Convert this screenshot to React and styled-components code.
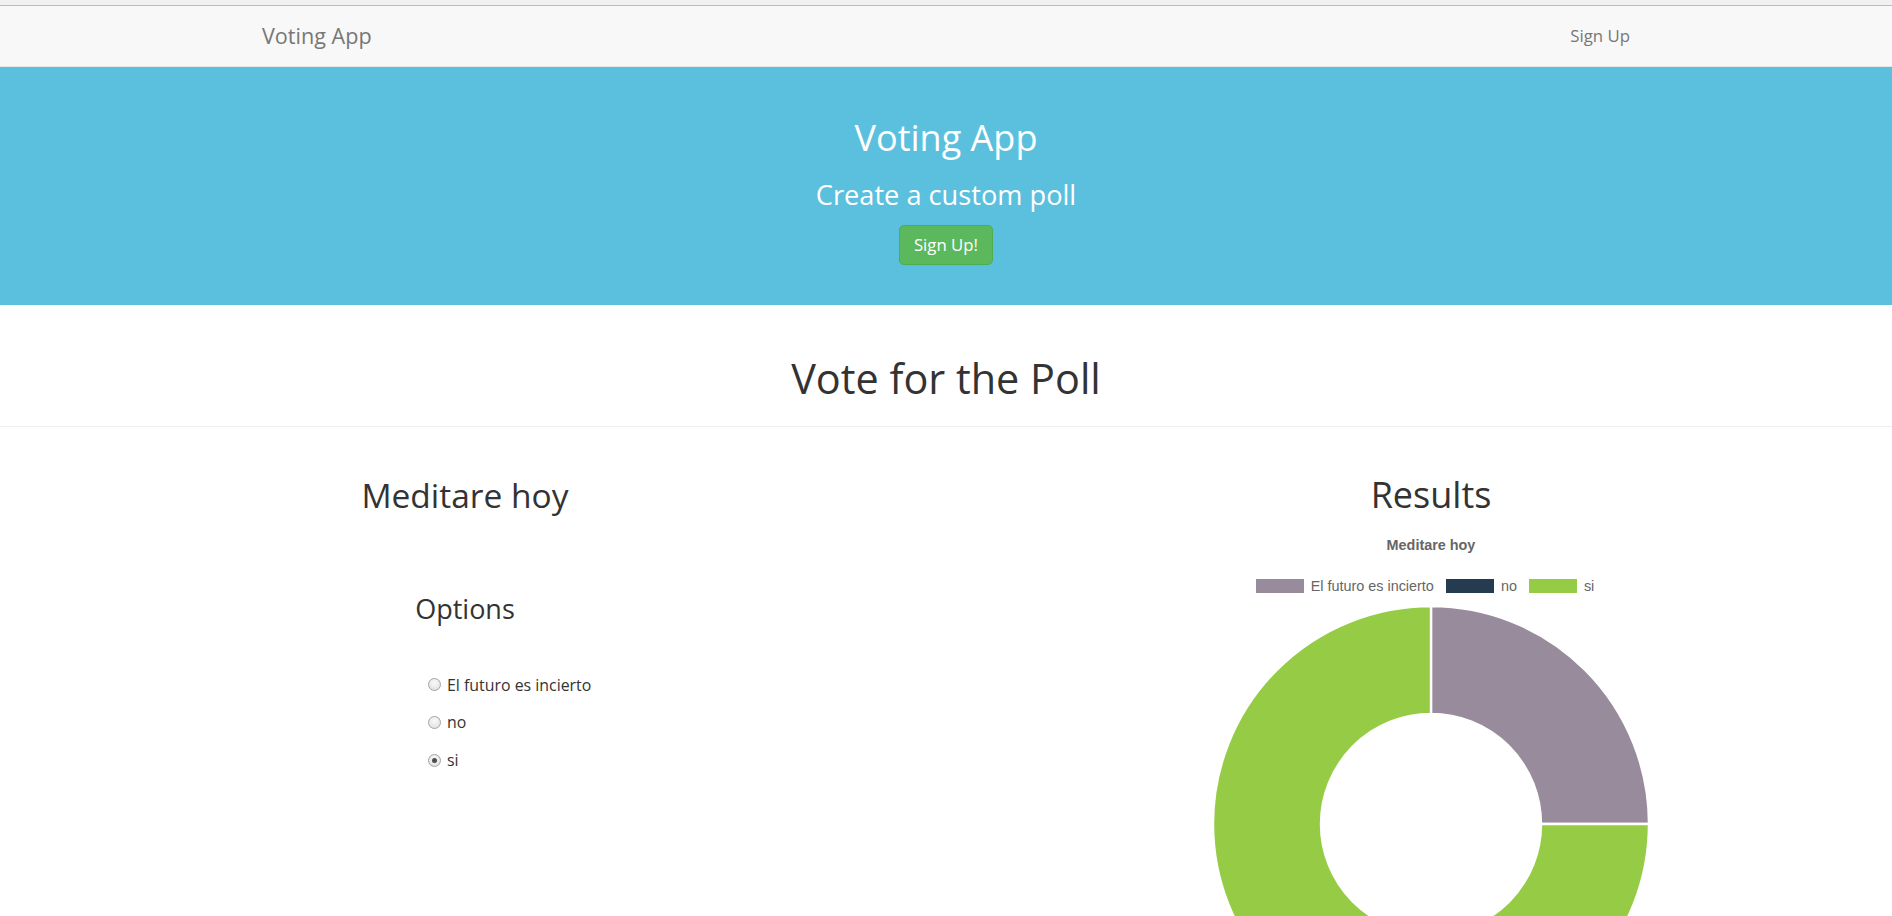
import React from "react";
import styled, { createGlobalStyle } from "styled-components";

const poll = {
  question: "Meditare hoy",
  options: [
    { label: "El futuro es incierto", votes: 1, color: "#978b9c" },
    { label: "no", votes: 0, color: "#243b50" },
    { label: "si", votes: 3, color: "#96cc45" }
  ],
  selected: "si"
};

const GlobalStyle = createGlobalStyle`
  html, body {
    margin: 0;
    padding: 0;
  }
  body {
    overflow: hidden;
    background: #fff;
    color: #333;
    font-family: "Open Sans", "Lato", sans-serif;
  }
  * {
    box-sizing: border-box;
  }
`;

const TopStrip = styled.div`
  height: 6px;
  background: #f1f1f1;
  border-bottom: 1px solid #bcbcbc;
`;

const Navbar = styled.nav`
  height: 61px;
  background: #f8f8f8;
  border-bottom: 1px solid #e7e7e7;
`;

const NavInner = styled.div`
  width: 1404px;
  height: 100%;
  margin: 0 auto;
  padding: 0 18px 2px;
  display: flex;
  align-items: center;
  justify-content: space-between;
`;

const Brand = styled.a`
  font-size: 21.6px;
  color: #777;
  text-decoration: none;
`;

const NavLink = styled.a`
  font-size: 16.8px;
  color: #777;
  text-decoration: none;
`;

const Jumbotron = styled.header`
  background: #5bc0de;
  color: #fff;
  text-align: center;
  padding: 47px 0 40px;
  display: flex;
  flex-direction: column;
  align-items: center;
`;

const HeroTitle = styled.h1`
  margin: 0;
  font-size: 36px;
  line-height: 48px;
  font-weight: 400;
`;

const HeroSub = styled.h3`
  margin: 17.4px 0 0;
  font-size: 27.2px;
  line-height: 32px;
  font-weight: 400;
`;

const SuccessButton = styled.button`
  margin-top: 13.6px;
  height: 40px;
  padding: 0 14px;
  border: 1px solid #4cae4c;
  border-radius: 5px;
  background: #5cb85c;
  color: #fff;
  font-family: inherit;
  font-size: 16.8px;
  cursor: pointer;
`;

const PageHeader = styled.div`
  padding-top: 49px;
  padding-bottom: 24px;
  border-bottom: 1px solid #eee;
  text-align: center;
`;

const PageTitle = styled.h1`
  margin: 0;
  font-size: 41.4px;
  line-height: 48px;
  font-weight: 400;
  color: #333;
`;

const Row = styled.div`
  display: grid;
  grid-template-columns: 1fr 1fr;
`;

const Column = styled.section`
  display: flex;
  flex-direction: column;
  align-items: center;
  padding-left: ${props => (props.right ? "24px" : "0")};
  padding-right: ${props => (props.right ? "0" : "16px")};
`;

const ColumnTitle = styled.h2`
  margin: 48px 0 0;
  font-size: ${props => (props.narrow ? "33.5px" : "36px")};
  line-height: 40px;
  font-weight: 400;
  color: #333;
`;

const OptionsForm = styled.form`
  margin-top: 78.4px;
  width: 200px;
  display: flex;
  flex-direction: column;
  align-items: center;
`;

const OptionsTitle = styled.h3`
  margin: 0;
  font-size: 27px;
  line-height: 32px;
  font-weight: 400;
`;

const RadioList = styled.div`
  margin-top: 47.4px;
  align-self: stretch;
  padding-left: 63px;
  display: flex;
  flex-direction: column;
  gap: 13.7px;
`;

const RadioLabel = styled.label`
  display: flex;
  align-items: center;
  height: 24px;
  gap: 6px;
  font-size: 15.9px;
  color: #333;
  white-space: nowrap;
`;

const Radio = styled.input`
  appearance: none;
  margin: 0;
  width: 13px;
  height: 13px;
  border-radius: 50%;
  border: 1px solid #a3a3a3;
  background: radial-gradient(circle at 50% 35%, #fafafa, #dcdcdc);
  position: relative;
  flex: none;
  &:checked::after {
    content: "";
    position: absolute;
    left: 3px;
    top: 3px;
    width: 5px;
    height: 5px;
    border-radius: 50%;
    background: #4d4d4d;
  }
`;

const ChartTitle = styled.div`
  margin-top: 22px;
  font-family: "Liberation Sans", Arial, sans-serif;
  font-size: 14.4px;
  line-height: 17px;
  font-weight: 700;
  color: #666;
`;

const Legend = styled.ul`
  margin: 25px 0 0;
  padding: 0;
  list-style: none;
  display: flex;
  align-items: center;
  height: 14px;
`;

const LegendItem = styled.li`
  display: flex;
  align-items: center;
  gap: 7px;
  margin-left: 12px;
  font-family: "Liberation Sans", Arial, sans-serif;
  font-size: 14.4px;
  color: #666;
  &:first-child {
    margin-left: 0;
  }
  &:last-child {
    margin-right: 12px;
  }
`;

const Swatch = styled.span`
  width: 48px;
  height: 14px;
  background: ${props => props.color};
`;

const Donut = styled.svg`
  margin-top: 11px;
  display: block;
  flex: none;
`;

const polar = (cx, cy, r, deg) => {
  const a = ((deg - 90) * Math.PI) / 180;
  return [cx + r * Math.cos(a), cy + r * Math.sin(a)];
};

const arcPath = (cx, cy, R, r, start, end) => {
  const large = end - start > 180 ? 1 : 0;
  const [x1, y1] = polar(cx, cy, R, start);
  const [x2, y2] = polar(cx, cy, R, end);
  const [x3, y3] = polar(cx, cy, r, end);
  const [x4, y4] = polar(cx, cy, r, start);
  return `M${x1} ${y1} A${R} ${R} 0 ${large} 1 ${x2} ${y2} L${x3} ${y3} A${r} ${r} 0 ${large} 0 ${x4} ${y4} Z`;
};

function DoughnutChart({ options }) {
  const total = options.reduce((s, o) => s + o.votes, 0);
  let angle = 0;
  const slices = options
    .filter(o => o.votes > 0)
    .map(o => {
      const start = angle;
      angle += (o.votes / total) * 360;
      return { ...o, start, end: angle };
    });
  return (
    <Donut width="440" height="440" viewBox="0 0 440 440">
      {slices.map(s => (
        <path
          key={s.label}
          d={arcPath(220, 220, 218, 110, s.start, s.end)}
          fill={s.color}
          stroke="#fff"
          strokeWidth="2.4"
        />
      ))}
    </Donut>
  );
}

export default function App() {
  return (
    <>
      <GlobalStyle />
      <TopStrip />
      <Navbar>
        <NavInner>
          <Brand href="#">Voting App</Brand>
          <NavLink href="#">Sign Up</NavLink>
        </NavInner>
      </Navbar>
      <Jumbotron>
        <HeroTitle>Voting App</HeroTitle>
        <HeroSub>Create a custom poll</HeroSub>
        <SuccessButton>Sign Up!</SuccessButton>
      </Jumbotron>
      <PageHeader>
        <PageTitle>Vote for the Poll</PageTitle>
      </PageHeader>
      <Row>
        <Column>
          <ColumnTitle narrow>{poll.question}</ColumnTitle>
          <OptionsForm>
            <OptionsTitle>Options</OptionsTitle>
            <RadioList>
              {poll.options.map(o => (
                <RadioLabel key={o.label}>
                  <Radio
                    type="radio"
                    name="option"
                    defaultChecked={o.label === poll.selected}
                  />
                  {o.label}
                </RadioLabel>
              ))}
            </RadioList>
          </OptionsForm>
        </Column>
        <Column right>
          <ColumnTitle>Results</ColumnTitle>
          <ChartTitle>{poll.question}</ChartTitle>
          <Legend>
            {poll.options.map(o => (
              <LegendItem key={o.label}>
                <Swatch color={o.color} />
                {o.label}
              </LegendItem>
            ))}
          </Legend>
          <DoughnutChart options={poll.options} />
        </Column>
      </Row>
    </>
  );
}
